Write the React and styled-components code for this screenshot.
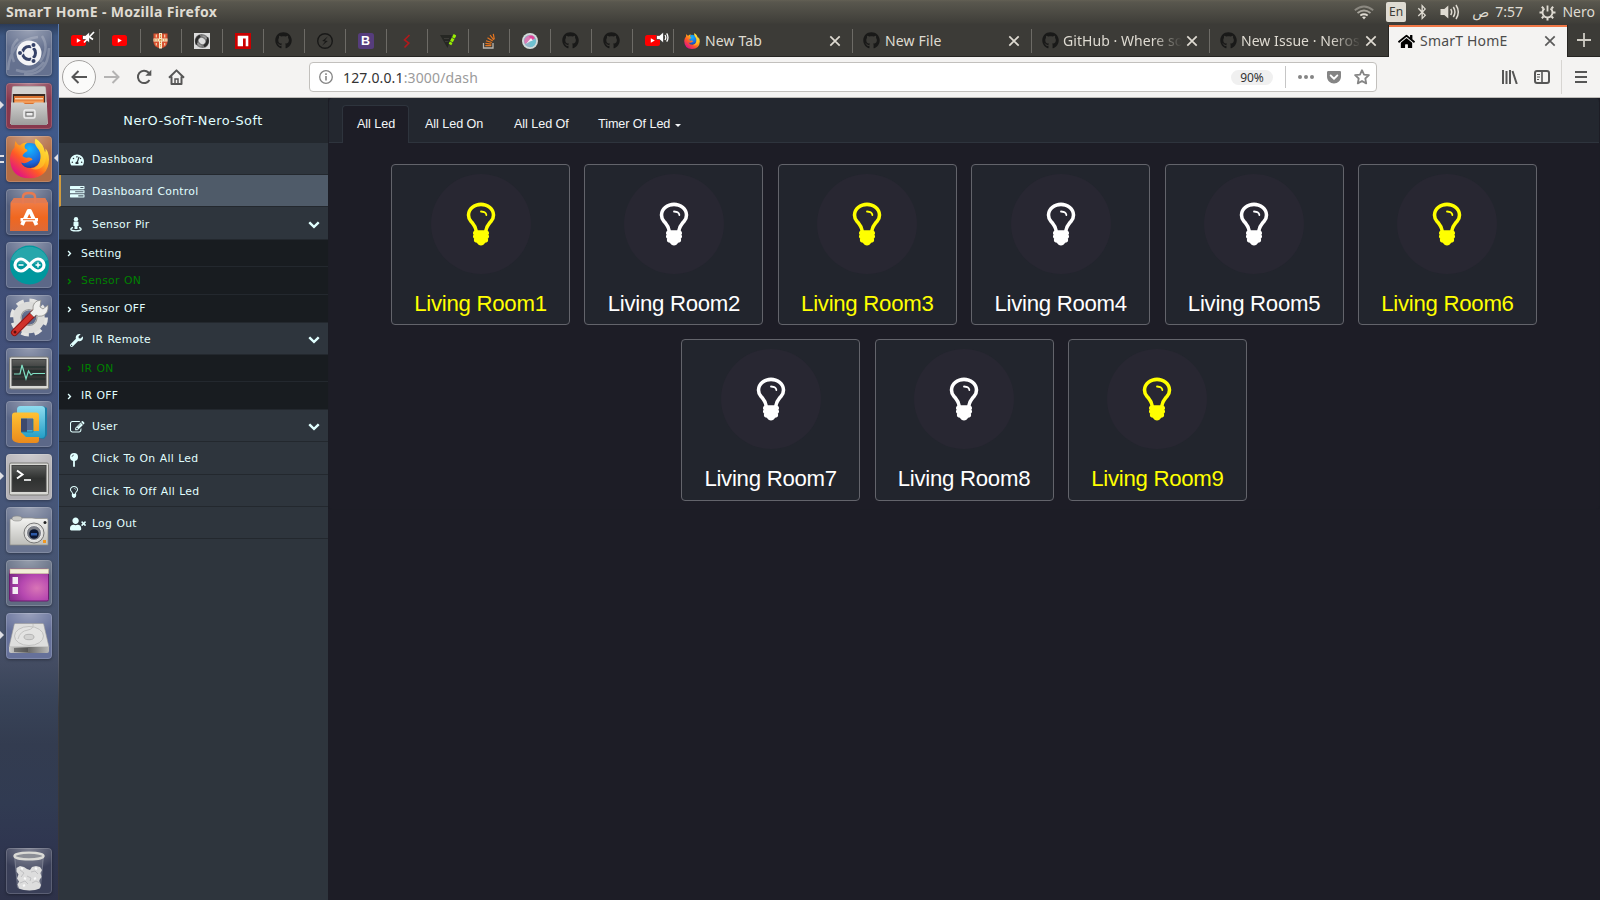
import React from "react";
import styled, { createGlobalStyle, css } from "styled-components";
import {
  FaTachometerAlt, FaWrench, FaUserTimes,
  FaAngleRight, FaGithub, FaHome, FaBluetoothB, FaGetPocket,
} from "react-icons/fa";

const Global = createGlobalStyle`
  * { box-sizing: border-box; }
  html, body { margin: 0; height: 100%; overflow: hidden; }
  svg { display: block; flex: none; }
`;

/* ---------- desktop shell ---------- */
const Desktop = styled.div`
  width: 1600px; height: 900px; overflow: hidden;
  display: flex; flex-direction: column;
  font-family: "Noto Sans", "DejaVu Sans", sans-serif;
  background: #1d1d26;
`;
const TopBar = styled.header`
  height: 24px; flex: none; display: flex; align-items: center; justify-content: space-between;
  padding: 0 5px 0 6px; color: #dfdbd2;
  background: linear-gradient(#636054 0, #59574e 2px, #3f3e39 23px, #3c3b37 24px);
`;
const WindowTitle = styled.div`
  font-size: 14px; font-weight: 700; letter-spacing: 0.33px; line-height: 24px; white-space: nowrap;
`;
const Indicators = styled.div`display: flex; align-items: center; height: 24px; font-size: 14px;`;
const Indicator = styled.div`
  display: flex; align-items: center; justify-content: ${p => (p.$end ? "flex-end" : "center")}; gap: ${p => p.$gap || 6}px;
  width: ${p => p.$w}px; white-space: nowrap; line-height: 22px; height: 23px;
`;
const LangBadge = styled.div`
  width: 20px; height: 20px; border-radius: 2px; background: #dfdbd2; color: #3c3b37;
  font-size: 12px; line-height: 20px; text-align: center;
`;
const Body = styled.div`flex: 1; min-height: 0; display: flex;`;

/* ---------- launcher ---------- */
const Launcher = styled.nav`
  width: 59px; flex: none; display: flex; flex-direction: column; gap: 7px; padding: 6px 0 6px 6px;
  border-right: 1px solid #5673a3;
  border-image: linear-gradient(#5b7cb0, #4e6a9b 55%, #5a6070 72%, #3b3b3e 78%, #35353a) 1;
  background: linear-gradient(#2b3b58 0, #3d5680 12px, #40598a 110px, #3a4a70 190px, #42507a 300px, #465679 470px, #47536c 600px, #434c62 640px, #394459 672px, #333c50 720px, #313b52 780px, #2f3650 820px, #2e3249 876px);
`;
const Tile = styled.div`
  position: relative; width: 46px; height: 46px; flex: none; border-radius: 4px;
  margin-top: ${p => (p.$last ? "auto" : 0)};
  background: radial-gradient(ellipse 32px 22px at 50% 0, rgba(255,255,255,.34), rgba(255,255,255,0)), ${p => p.$bg};
  box-shadow: inset 0 0 0 1px rgba(255,255,255,.17), 0 1px 3px rgba(0,0,0,.35);
`;
const Pip = styled.i`
  position: absolute; top: 18px; width: 0; height: 0; border: 4px solid transparent;
  ${p => p.$right
    ? css`right: -6px; border-right-color: #dfdfe4; border-left-width: 0;`
    : css`left: -6px; border-left-color: #dfdfe4; border-right-width: 0;`}
`;
const DoublePip = styled.i`
  position: absolute; left: -6px; top: 19px; width: 4px; height: 8px;
  border: solid #dfdfe4; border-width: 2px 0;
`;

/* ---------- browser ---------- */
const Browser = styled.main`flex: 1; min-width: 0; display: flex; flex-direction: column;`;
const TabStrip = styled.div`
  height: 33px; flex: none; display: flex; background: #3c3b37; border-bottom: 1px solid #262522;
`;
const Sep = css`
  &::after { content: ""; width: 1px; height: 24px; background: #6d6b66; flex: none; align-self: center; margin-top: 1px; }
`;
const PinnedTab = styled.div`
  width: 41px; flex: none; display: flex; align-items: center;
  ${Sep}
`;
const PinIcon = styled.div`
  position: relative; flex: 1; display: flex; align-items: center; justify-content: center; padding: 1px 1px 0 0;
`;
const AudioMark = styled.div`position: absolute; left: 23px; top: -3px;`;
const Tab = styled.div`
  width: ${p => p.$w || 179}px; flex: none; display: flex; align-items: center; padding: 1px 0 0 10px;
  color: ${p => (p.$active ? "#4c4c4c" : "#dfdbd2")};
  ${p => p.$active
    ? css`background: #f4f3f2; border-top: 2px solid #f07746; margin: 1px 0 -1px; box-shadow: -1px 0 #262522, 1px 0 #262522; padding: 0 0 2px 9px; width: 178px; margin-right: 1px;`
    : p.$noSep ? "" : Sep}
`;
const TabLabel = styled.span`
  flex: 1; min-width: 0; margin-left: ${p => (p.$fade ? 4 : 5)}px; overflow: hidden; white-space: nowrap;
  font-size: 14px; line-height: 22px; letter-spacing: ${p => (p.$ls === undefined ? 0.15 : p.$ls)}px;
  ${p => p.$fade && css`mask-image: linear-gradient(90deg, #000 calc(100% - 30px), transparent);`}
`;
const CloseBox = styled.div`width: 12px; margin: 0 ${p => p.$mr || 11}px 0 4px; color: ${p => p.$c || "#dfdbd2"};`;
const NewTabButton = styled.div`flex: 1; display: flex; align-items: center; justify-content: center; color: #cfccc4;`;
const Toolbar = styled.div`
  height: 41px; flex: none; display: flex; align-items: center; color: #565656;
  background: #f4f3f2; border-bottom: 1px solid #bdbbb8;
`;
const BackButton = styled.div`
  width: 34px; height: 34px; margin: 0 0 0 3px; border-radius: 50%; border: 1px solid #a4a2a0;
  background: #fbfbfa; display: flex; align-items: center; justify-content: center;
`;
const ToolIcon = styled.div`
  width: 32px; display: flex; justify-content: center; opacity: ${p => (p.$off ? 0.4 : 1)};
`;
const UrlBar = styled.div`
  width: 1068px; height: 30px; margin-left: 117px; border: 1px solid #c2c0bd; border-radius: 4px;
  background: #fff; display: flex; align-items: center; padding: 0 6px 0 9px;
`;
const Url = styled.div`
  flex: 1; margin-left: 10px; font-size: 14px; letter-spacing: 0.15px; color: #9b9b9b;
  b { font-weight: 400; color: #333; }
`;
const ZoomBadge = styled.div`
  width: 42px; height: 15px; border-radius: 8px; background: #f0f0f0; color: #333;
  font-size: 12px; line-height: 15px; text-align: center; margin-right: 12px;
`;
const VLine = styled.div`width: 1px; height: ${p => p.$h}px; background: ${p => p.$c || "#c6c6c6"};`;
const UrlActions = styled.div`display: flex; align-items: center; gap: 12px; margin-left: 12px; color: #858585;`;
const ToolbarRight = styled.div`margin-left: auto; display: flex; align-items: center;`;
const MenuSlot = styled.div`width: 38px; display: flex; justify-content: center;`;
const Gap = styled.div`width: 3px;`;

/* ---------- page ---------- */
const Page = styled.div`flex: 1; min-height: 0; display: flex; background: #1d1d26;`;
const Sidebar = styled.aside`
  width: 269px; flex: none; background: #2e353d; color: #e1ffff;
  font-family: "DejaVu Sans", Verdana, sans-serif; font-size: 10.8px; letter-spacing: 0.29px; word-spacing: 0.5px;
`;
const Brand = styled.div`
  height: 45px; background: #23282e; display: flex; align-items: center; justify-content: center;
  font-size: 12.9px; letter-spacing: 0.45px; padding: 0 1px 1px 0;
`;
const MenuRow = styled.div`
  height: ${p => p.$h || 32}px; display: flex; align-items: center; border-bottom: 1px solid #23282e;
  padding: 1px 8px 0 11px;
  ${p => p.$active && css`background: #4f5b69; border-left: 2px solid #d19b3d; padding-left: 9px;`}
`;
const MenuIcon = styled.div`width: 22px; display: flex; color: #e1ffff; padding-top: 2px;`;
const MenuText = styled.span`flex: 1; line-height: 20px; white-space: nowrap; padding-top: ${p => (p.$low ? 2 : 1)}px;`;
const SubRow = styled.div`
  height: ${p => p.$h}px; display: flex; align-items: center; background: #181c20;
  border-bottom: 1px solid #23282e; padding-left: 6px; color: ${p => (p.$on ? "green" : "#e1ffff")};
`;
const SubArrow = styled.div`width: 16px; padding-top: 1px;`;

const Content = styled.section`flex: 1; min-width: 0; font-family: "Liberation Sans", Arial, sans-serif;`;
const Panel = styled.div`
  height: 412px; border: 1px solid #1c1d25; border-radius: 4px; border-top: 0;
`;
const NavTabs = styled.div`
  height: 45px; display: flex; align-items: flex-end; padding-left: 13px; background: #23272f;
  border-bottom: 1px solid #2e343d; border-radius: 4px 4px 0 0;
`;
const NavTab = styled.div`
  height: 38px; margin-bottom: -1px; font-size: 12.6px; color: #f4f6f8;
  width: ${p => p.$w}px; white-space: nowrap; border: 1px solid transparent; border-bottom: 0;
  display: flex; align-items: center; padding: 0 0 1px 14px; letter-spacing: -0.06px;
  ${p => p.$active && css`background: #1d1d26; border-color: #2e343d; border-radius: 4px 4px 0 0; margin-right: 1px;`}
`;
const Caret = styled.i`
  border: 3.5px solid transparent; border-top-color: #f4f6f8; border-bottom: 0; margin: 2px 0 0 5px;
`;
const LedGrid = styled.div`
  display: flex; flex-wrap: wrap; justify-content: center; gap: 14px 14.4px; padding: 21px 48px 0 48px;
`;
const LedCard = styled.div`
  width: 179px; height: 161.4px; border: 1px solid #63646b; border-radius: 4px; background: #22252d;
  display: flex; flex-direction: column; align-items: center; padding-top: 9px;
  color: ${p => (p.$on ? "#ffff00" : "#ffffff")};
`;
const Disc = styled.div`
  width: 100px; height: 100px; border-radius: 50%; background: #282732;
  display: flex; align-items: center; justify-content: center;
`;
const LedName = styled.div`
  margin-top: 16px; font-size: 22.2px; letter-spacing: -0.27px; line-height: 27px; white-space: nowrap;
`;

/* ---------- glyphs ---------- */
const Bulb = ({ size, tight }) => (
  <svg width={tight ? size * 0.572 : size} height={size} viewBox={tight ? "384 0 1024 1792" : "0 0 1792 1792"} fill="currentColor">
    <path d="M1120 576q0 13-9.500 22.500t-22.500 9.500-22.500-9.500-9.500-22.500q0-46-54-71t-106-25q-13 0-22.500-9.500t-9.500-22.500 9.500-22.500 22.500-9.500q50 0 99.500 16t87 54 37.500 90zm160 0q0-72-34.500-134t-90-101.500-123-62-136.500-22.500-136.500 22.500-123 62-90 101.500-34.500 134q0 101 68 180 10 11 30.500 33t30.500 33q128 153 141 298h228q13-145 141-298 10-11 30.500-33t30.500-33q68-79 68-180zm128 0q0 155-103 268-45 49-74.500 87t-59.500 95.500-34 107.500q47 28 47 82 0 37-25 64 25 27 25 64 0 52-45 81 13 23 13 47 0 46-31.500 71t-77.500 25q-20 44-60 70t-87 26-87-26-60-70q-46 0-77.500-25t-31.500-71q0-24 13-47-45-29-45-81 0-37 25-64-25-27-25-64 0-54 47-82-4-50-34-107.500t-59.500-95.500-74.500-87q-103-113-103-268 0-99 44.500-184.500t117-142 164-89 186.500-32.500 186.500 32.500 164 89 117 142 44.500 184.500z" />
  </svg>
);
const Tasks = () => (
  <svg width="14.5" height="14.5" viewBox="0 0 1792 1792" fill="currentColor">
    <path d="M1024 1408h640v-128h-640v128zm-384-512h1024v-128h-1024v128zm640-512h384v-128h-384v128zm512 832v256q0 26-19 45t-45 19h-1664q-26 0-45-19t-19-45v-256q0-26 19-45t45-19h1664q26 0 45 19t19 45zm0-512v256q0 26-19 45t-45 19h-1664q-26 0-45-19t-19-45v-256q0-26 19-45t45-19h1664q26 0 45 19t19 45zm0-512v256q0 26-19 45t-45 19h-1664q-26 0-45-19t-19-45v-256q0-26 19-45t45-19h1664q26 0 45 19t19 45z" />
  </svg>
);
const Edit = () => (
  <svg width="14.5" height="14.5" viewBox="0 0 1792 1792" fill="currentColor">
    <path d="M888 1184l116-116-152-152-116 116v56h96v96h56zm440-720q-16-16-33 1l-350 350q-17 17-1 33t33-1l350-350q17-17 1-33zm80 594v190q0 119-84.500 203.500t-203.500 84.500h-832q-119 0-203.500-84.500t-84.500-203.500v-832q0-119 84.500-203.500t203.500-84.500h832q63 0 117 25 15 7 18 23 3 17-9 29l-49 49q-14 14-32 8-23-6-45-6h-832q-66 0-113 47t-47 113v832q0 66 47 113t113 47h832q66 0 113-47t47-113v-126q0-13 9-22l64-64q15-15 35-7t20 29zm-96-738l288 288-672 672h-288v-288zm444 132l-92 92-288-288 92-92q28-28 68-28t68 28l152 152q28 28 28 68t-28 68z" />
  </svg>
);
const StreetView = () => (
  <svg width="12" height="15" viewBox="0 0 12 15" fill="currentColor">
    <circle cx="6" cy="2.200" r="2.200" /><path d="M3.500 5.500q0-1 1-1h3q1 0 1 1v3.500H7.500V12h-3V9h-1z" />
    <path d="M3 10.500Q.8 11 .8 12.200 1 13.900 6 13.900t5.200-1.700Q11.200 11 9 10.500" fill="none" stroke="currentColor" strokeWidth="1.300" />
  </svg>
);
const MapPin = () => (
  <svg width="8" height="14" viewBox="0 0 8 14" fill="currentColor"><circle cx="4" cy="4" r="4" /><path d="M3.100 7h1.800v6.800H3.100z" /><path d="M2 4q0-2 2-2" fill="none" stroke="#2e353d" strokeWidth=".6" /></svg>
);
const ChevronDown = () => (
  <svg width="12" height="12" viewBox="0 0 1792 1792" fill="currentColor">
    <path d="M1683 808l-742 741q-19 19-45 19t-45-19l-742-741q-19-19-19-45.500t19-45.500l166-165q19-19 45-19t45 19l531 531 531-531q19-19 45-19t45 19l166 165q19 19 19 45.500t-19 45.500z" />
  </svg>
);
const Cross = () => (
  <svg width="12" height="12" viewBox="0 0 12 12" stroke="currentColor" strokeWidth="1.7"><path d="M1.300 1.300l9.400 9.400M10.700 1.300l-9.400 9.400" /></svg>
);
const YouTube = () => (
  <svg width="15" height="11" viewBox="0 0 15 11"><rect width="15" height="11" rx="2.500" fill="#f00" /><path d="M5.800 3.200v4.600l4-2.300z" fill="#fff" /></svg>
);
const Speaker = ({ muted }) => (
  <svg width="13" height="13" viewBox="0 0 13 13" stroke="#222" strokeWidth=".6">
    <path d="M.5 4.500h3L7.500 1v11l-4-3.500h-3z" fill="#fff" />
    {muted
      ? <path d="M12 1L2 11.500M8 6.500l3 2" stroke="#fff" strokeWidth="1.700" fill="none" />
      : <path d="M9 4q1.600 2.500 0 5M10.700 2.300q2.600 4.200 0 8.400" stroke="#fff" strokeWidth="1.300" fill="none" />}
  </svg>
);
const Shield = () => (
  <svg width="15" height="16" viewBox="0 0 15 16">
    <path d="M.5.5h14V9q0 5-7 6.500Q.5 14 .5 9z" fill="#d8512f" />
    <path d="M7.500 0v15.500M.5 7h14" stroke="#f6e6c6" strokeWidth="3" />
    <path d="M7.500 1v13M1 7h13" stroke="#d7822c" strokeWidth="1" strokeDasharray="1.500 1" />
    <path d="M3.300 1.500v3M11.700 1.500v3M3.300 10v2.500M11.700 10v2.500" stroke="#f3d3b0" strokeWidth="1.200" />
  </svg>
);
const Swirl = () => (
  <svg width="16" height="16" viewBox="0 0 16 16"><rect width="16" height="16" fill="#dcdcdc" />
    <ellipse cx="8" cy="8" rx="5.400" ry="4.900" transform="rotate(40 8 8)" fill="none" stroke="#777" strokeWidth="4" />
    <path d="M3 11.500Q.8 6 6 2.700" fill="none" stroke="#2a2a2a" strokeWidth="2.400" />
    <path d="M13 4.500Q15.200 10 10 13.300" fill="none" stroke="#2a2a2a" strokeWidth="2.400" />
    <path d="M8.500 3.200q3 .2 4 3M7.500 12.800q-3-.2-4-3" fill="none" stroke="#999" strokeWidth="1.300" /></svg>
);
const Npm = () => (
  <svg width="16" height="16" viewBox="0 0 16 16"><rect width="16" height="16" fill="#cb0000" /><path d="M2.700 2.700h10.600v10.600h-2.600V5.400H8v7.900H2.700z" fill="#fff" /></svg>
);
const Bolt = () => (
  <svg width="16" height="16" viewBox="0 0 16 16"><circle cx="8" cy="8" r="7.300" fill="none" stroke="#191918" strokeWidth="1.400" /><path d="M11 3.200L5.200 7.900l2.900.6L5 12.800l5.800-4.700-2.900-.6z" fill="#191918" /></svg>
);
const BBadgeBox = styled.div`
  width: 16px; height: 16px; border-radius: 2.5px; background: #563d7c; color: #fff;
  font: 700 12.5px/16px "Liberation Sans", sans-serif; text-align: center;
`;
const RedS = () => (
  <svg width="16" height="16" viewBox="0 0 16 16"><path d="M10.500 2L5.500 7l4.300 3-4.300 4.500" fill="none" stroke="#b3191b" strokeWidth="1.600" /></svg>
);
const VMark = () => (
  <svg width="16" height="16" viewBox="0 0 16 16"><path d="M0 2h12L7.500 15z" fill="#262723" /><path d="M4 5.500h5M5 8.500h3.500" stroke="#3c3b37" /><path d="M15 1.800L10 11.500" stroke="#98f000" strokeWidth="3" strokeDasharray="3.500 .7" /></svg>
);
const PinkDisc = () => (
  <svg width="16" height="16" viewBox="0 0 16 16"><circle cx="8" cy="8" r="8" fill="#d3dcda" /><circle cx="8" cy="8" r="6.200" fill="#8fb4c8" />
    <path d="M3 11A6 6 0 0 1 12 3.500L8 8z" fill="#d97bb4" /><path d="M7 3.200q4-1.500 6 2L9 7.500z" fill="#e0459b" /><path d="M8 8l5.800-1.500A6 6 0 0 1 8 14z" fill="#6fc2d0" /><path d="M4 11l5-6 1.800 2.500-3 1z" fill="#f6f0f6" /></svg>
);
const Fox = ({ size }) => (
  <svg width={size} height={size} viewBox="0 0 40 40">
    <defs>
      <linearGradient id="fx" x1=".85" y1=".1" x2=".2" y2=".9"><stop offset="0" stopColor="#fff04a" /><stop offset=".35" stopColor="#ffb01c" /><stop offset=".65" stopColor="#ff5a26" /><stop offset="1" stopColor="#e31580" /></linearGradient>
      <radialGradient id="fb" cx=".5" cy=".2" r=".8"><stop offset="0" stopColor="#15b8ff" /><stop offset=".6" stopColor="#1a66dc" /><stop offset="1" stopColor="#26225f" /></radialGradient>
    </defs>
    <circle cx="20" cy="19" r="14.500" fill="url(#fb)" />
    <path d="M26 0q-2 5 1.500 9 4.500 5 3.500 11-1.500 9-10 9.500-7 0-9.500-5.500 4 1.500 7-.5 3-2.200 4.500-2-.5-2.800-4.500-2.500-3 .8-5.500-1.500.5-2.500 5-5 .2-1.800-2.500-2.500Q14 6 18 4q-5 0-7.500 3-2.500-.5-4.500-4.500Q5 6 5 9 1 13 .5 20 1 39.500 20 40 39 39 39.500 21 39.500 14 36 10q.3 3-.5 4Q34 5 26 0z" fill="url(#fx)" />
    <path d="M31 20q-1 9-10 10 8 3 13-3 4-6 1.500-13-2-7-6-8 2 7 1.500 14z" fill="#ffd32e" opacity=".55" />
  </svg>
);
const StackIcon = () => (
  <svg width="16" height="16" viewBox="0 0 16 16" fill="none"><path d="M2.500 10v5h9.500v-5" stroke="#b9b6b0" strokeWidth="1.300" /><path d="M4.300 12.700h6M4.400 10.300l6 .8M5 7.700l5.800 1.800M6.500 4.800l5.200 3.200M9 2l3.700 4.900M12.300.8l1 5.500" stroke="#e8761f" strokeWidth="1.200" /></svg>
);

/* ---------- launcher drawings, all on a 46px tile ---------- */
const Art = ({ children }) => <svg width="46" height="46" viewBox="0 0 46 46">{children}</svg>;
const UbuntuArt = () => (
  <Art>
    <path d="M2 40Q4 10 32 7M8 32Q2 18 12 9M18 44Q42 46 43 18M10 40q18 6 28-8M36 6q8 12-2 26" stroke="#fff" strokeOpacity=".2" strokeWidth="2.500" fill="none" />
    <circle cx="23" cy="23" r="12.500" fill="#f4f4f6" /><circle cx="23" cy="23" r="6.500" fill="none" stroke="#364268" strokeWidth="3" />
    <path d="M23 23L13 23M23 23l5.500 9M23 23l5.500-9" stroke="#f4f4f6" strokeWidth="1.500" />
    <circle cx="14" cy="23" r="3" fill="#f4f4f6" /><circle cx="27.500" cy="15" r="3" fill="#f4f4f6" /><circle cx="27.500" cy="31" r="3" fill="#f4f4f6" />
    <circle cx="14" cy="23" r="2" fill="#364268" /><circle cx="27.500" cy="15" r="2" fill="#364268" /><circle cx="27.500" cy="31" r="2" fill="#364268" />
  </Art>
);
const FilesArt = () => (
  <Art>
    <defs><linearGradient id="fl" x1="0" y1="0" x2="0" y2="1"><stop offset="0" stopColor="#cfcfcd" /><stop offset="1" stopColor="#9d9d9c" /></linearGradient></defs>
    <path d="M6 5q0-2 2-2h30q2 0 2 2l2 36H4z" fill="#b5b3b0" /><path d="M7 4h32l1 7H6z" fill="#d3d2cf" />
    <rect x="7" y="11" width="32" height="10" fill="#3c2a22" /><path d="M8 13h30v8H8z" fill="#d9722f" /><path d="M9 15h28v1.500H9z" fill="#f9d7ae" /><path d="M9 17.500h28V20H9z" fill="#f29b58" />
    <path d="M5 19.500h12l2 1.500h8l2-1.500h12V42H5z" fill="url(#fl)" /><rect x="18" y="27" width="11" height="8" rx="1.500" fill="#b9b9b8" stroke="#efefef" strokeWidth="1.500" /><rect x="20" y="29.500" width="7" height="3.500" fill="#eee" stroke="#666" strokeWidth=".8" />
  </Art>
);
const FirefoxArt = () => <Art><svg x="3.500" y="2.500" width="40" height="41"><Fox size={40} /></svg></Art>;
const SoftwareArt = () => (
  <Art>
    <defs><linearGradient id="sw" x1="0" y1="0" x2="0" y2="1"><stop offset="0" stopColor="#f0824f" /><stop offset=".6" stopColor="#f0671f" /><stop offset="1" stopColor="#dd6a38" /></linearGradient></defs>
    <path d="M4.500 14L8 9h31l3 5v28h-38z" fill="url(#sw)" /><path d="M4.500 14L8 9h31l3 5z" fill="#e07a52" />
    <path d="M17 15V8q0-4 6-4t6 4v7" fill="none" stroke="#e77a50" strokeWidth="2.500" />
    <path d="M16 36l6.500-14h1.500l6.500 14" fill="none" stroke="#fff" strokeWidth="3.800" strokeLinejoin="round" /><path d="M14.500 29h17.500v3.500H14.500z" fill="#fff" /><path d="M17 30.700h12" stroke="#f0671f" />
  </Art>
);
const ArduinoArt = () => (
  <Art>
    <circle cx="23.500" cy="23" r="19.500" fill="#00979d" /><path d="M5 18a19.500 19.500 0 0 1 37 0q-18 8-37 0z" fill="#fff" opacity=".15" />
    <path d="M23.500 23c-4-5-6-6-8.500-6a6 6 0 1 0 0 12c2.500 0 4.500-1 8.500-6s6-6 8.500-6a6 6 0 1 1 0 12c-2.500 0-4.500-1-8.500-6z" fill="none" stroke="#fff" strokeWidth="3.200" />
    <path d="M12.500 23h5M29.500 23h5M32 20.500v5" stroke="#fff" strokeWidth="1.500" />
  </Art>
);
const SettingsArt = () => (
  <Art>
    <circle cx="23" cy="22.500" r="16.500" fill="none" stroke="#e4e4e2" strokeWidth="5" strokeDasharray="7.400 5.550" /><circle cx="23" cy="22.500" r="11.500" fill="none" stroke="#dcdcda" strokeWidth="8.500" /><circle cx="23" cy="22.500" r="8" fill="none" stroke="#9a9a98" strokeWidth="1.200" />
    <path d="M8.500 37.500L28 18" stroke="#8d1515" strokeWidth="7" strokeLinecap="round" /><path d="M8.500 37.500L28 18" stroke="#d0322b" strokeWidth="5" strokeLinecap="round" />
    <path d="M27 15q-1-9 8-10l-1 7 3 2 5-4q1 9-6 11-4 1-6-1l-2 2-4-4z" fill="#eeeeec" stroke="#8b8b88" strokeWidth=".8" /><circle cx="9" cy="37" r="1.500" fill="#5b0d0d" />
  </Art>
);
const Screen = ({ children, id }) => (
  <>
    <defs><linearGradient id={id} x1="0" y1="0" x2="0" y2="1"><stop offset="0" stopColor="#5c5e5c" /><stop offset=".5" stopColor="#2f3130" /><stop offset="1" stopColor="#3d3d3d" /></linearGradient></defs>
    <rect x="3.500" y="9" width="39" height="32" rx="1.500" fill="#d8d8d4" stroke="#7c7c78" /><rect x="6" y="11.500" width="34" height="26" fill={`url(#${id})`} stroke="#444" />{children}
  </>
);
const MonitorArt = () => (
  <Art><Screen id="mo"><path d="M6.500 19h33M6.500 23h33M6.500 27h33M6.500 31h33" stroke="#1c2b28" /><path d="M8 26h6l2-9 4 14 2.500-8 2.500 4 2-1.500h12" fill="none" stroke="#7fe0c4" strokeWidth="1.200" /></Screen></Art>
);
const VmwareArt = () => (
  <Art>
    <defs><linearGradient id="vb" x1="0" y1="0" x2="0" y2="1"><stop offset="0" stopColor="#8fdcf0" /><stop offset="1" stopColor="#249fc6" /></linearGradient><linearGradient id="vo" x1="0" y1="0" x2="0" y2="1"><stop offset="0" stopColor="#ffc233" /><stop offset="1" stopColor="#ea8a1c" /></linearGradient></defs>
    <path d="M15 8l22-3 4 2v27l-3 4-22-4z" fill="#1b7ea6" />
    <rect x="11" y="5" width="28" height="32" rx="3.500" fill="url(#vb)" />
    <path d="M9 11.500h21q3 0 3 3V30h-6V17.500H15V31l5 5h13v3q0 3-3 3H13q-7-1-7-5V14.500q0-3 3-3z" fill="url(#vo)" />
    <path d="M15 17.500h6V31h-6z" fill="#3d4a6e" /><path d="M21 17.500h6V29h-6z" fill="#56668c" />
    <path d="M15 31h12V18" fill="none" stroke="#1b7ea6" strokeWidth=".8" />
  </Art>
);
const TerminalArt = () => <Art><Screen id="te"><path d="M11 16.500l5.500 4-5.500 4" fill="none" stroke="#fff" strokeWidth="2" /><path d="M18 26h7" stroke="#fff" strokeWidth="1.600" /></Screen></Art>;
const CameraArt = () => (
  <Art>
    <defs><linearGradient id="ca" x1="0" y1="0" x2="0" y2="1"><stop offset="0" stopColor="#f3f3f1" /><stop offset="1" stopColor="#bdbdb9" /></linearGradient></defs>
    <path d="M4 12h8l2-1h12l4 .5h11q1 0 1 2v24.500H4z" fill="url(#ca)" stroke="#8c8c88" strokeWidth=".7" /><ellipse cx="11" cy="11.500" rx="5" ry="2.500" fill="#c9c9c5" stroke="#888" strokeWidth=".6" />
    <circle cx="28" cy="26" r="10" fill="#dededc" stroke="#777" /><circle cx="28" cy="26" r="7.500" fill="#7d8088" stroke="#eee" /><circle cx="28" cy="27" r="4.800" fill="#0b1530" /><path d="M25 26h6v2.500h-6z" fill="#2c59a8" />
    <circle cx="39" cy="15.500" r="1.500" fill="#222" /><rect x="37" y="33" width="3" height="3" fill="#f2971f" />
  </Art>
);
const WindowArt = () => (
  <Art>
    <defs><radialGradient id="wi" cx=".7" cy=".6" r=".8"><stop offset="0" stopColor="#d975b6" /><stop offset=".5" stopColor="#b648b0" /><stop offset="1" stopColor="#7d2b86" /></radialGradient></defs>
    <rect x="3.500" y="9" width="39" height="32" rx="1.500" fill="url(#wi)" stroke="#6d1a70" /><path d="M4 9h38.500v4.500H4z" fill="#f1eed8" stroke="#cfc8a2" strokeWidth=".7" />
    <path d="M6.500 17H12v7H6.500zM6.500 27H12v7H6.500z" fill="#f3eef3" />
  </Art>
);
const DiskArt = () => (
  <Art>
    <defs><linearGradient id="di" x1="0" y1="0" x2="1" y2="0"><stop offset="0" stopColor="#cfcfcd" /><stop offset=".5" stopColor="#6c6c6b" /><stop offset="1" stopColor="#b9b9b7" /></linearGradient></defs>
    <path d="M9.500 10.500h27q1 0 1.300 1L43 34H3l5.200-22.500q.3-1 1.300-1z" fill="#dededd" stroke="#999" strokeWidth=".6" />
    <ellipse cx="23" cy="23" rx="14.500" ry="9.500" fill="#e3e3e2" stroke="#c2c2c1" /><ellipse cx="23" cy="24" rx="5" ry="2.700" fill="#d2d2d1" stroke="#aaa" strokeWidth=".8" /><path d="M27 11q1 5-5 6-8 1-10 9" fill="none" stroke="#c4c4c3" />
    <path d="M3 34h40v4q0 2-2 2H5q-2 0-2-2z" fill="url(#di)" /><path d="M8 35h14v4H8z" fill="#444" opacity=".6" />
  </Art>
);
const TrashArt = () => (
  <Art>
    <path d="M8.500 8h29l-3 31q-.3 2.500-11.500 2.500T11.500 39z" fill="#fff" fillOpacity=".12" stroke="#d5d7de" strokeOpacity=".3" />
    <path d="M10.500 20l3.500-2 4 1 3 2 3 1 2-3 4-1 4 1 2 3-1.500 3 1 4-2 3v2l1.500 3-1.500 3.500q-4 2-10 2t-10.500-2l-1.500-4 1.500-3-2-3 1.500-4-2-3z" fill="#dddddd" />
    <path d="M14 22l4 3-3 4M25 24l4-1 3 3M14 35l5-2 3 3M26 35l4-2 4 2M21 28l4 2-1 3" fill="none" stroke="#c0c0c2" />
    <path d="M15 20l2 1M29 20l2 1M18 30l2 1M30 30l-2 1M17 38l2-1" stroke="#fafafa" strokeWidth="2" />
    <ellipse cx="23" cy="8" rx="14.500" ry="3.400" fill="#8b8e96" stroke="#dadad6" strokeWidth="2.400" />
  </Art>
);

const APPS = [
  { art: UbuntuArt, bg: "#65718f" },
  { art: FilesArt, bg: "#87384d", pip: true },
  { art: FirefoxArt, bg: "#b26c44", dbl: true },
  { art: SoftwareArt, bg: "#535e7c" },
  { art: ArduinoArt, bg: "#5c6888" },
  { art: SettingsArt, bg: "#5c6888" },
  { art: MonitorArt, bg: "#5c6888" },
  { art: VmwareArt, bg: "#5c6888" },
  { art: TerminalArt, bg: "#b4b2b6", pip: true },
  { art: CameraArt, bg: "#68738f" },
  { art: WindowArt, bg: "#606b81" },
  { art: DiskArt, bg: "#66719a", pip: true },
];

const PINNED = [
  <><YouTube /><AudioMark><Speaker muted /></AudioMark></>,
  <YouTube />, <Shield />, <Swirl />, <Npm />,
  <FaGithub size={17} color="#191918" />, <Bolt />, <BBadgeBox>B</BBadgeBox>, <RedS />, <VMark />,
  <StackIcon />, <PinkDisc />,
  <FaGithub size={17} color="#191918" />, <FaGithub size={17} color="#191918" />,
  <><YouTube /><AudioMark><Speaker /></AudioMark></>,
];

const LEDS = [true, false, true, false, false, true, false, false, true];

function TopPanel() {
  return (
    <TopBar>
      <WindowTitle>SmarT HomE - Mozilla Firefox</WindowTitle>
      <Indicators>
        <Indicator $w={22}>
          <svg width="20" height="15" viewBox="0 0 20 15" fill="none" strokeWidth="1.800">
            <path d="M.8 5.200q9.200-7.500 18.400 0" stroke="#8b8880" /><path d="M3.500 8q6.500-5 13 0" stroke="#a9a69d" /><path d="M6.300 10.500q3.700-2.500 7.400 0" stroke="#dfdbd2" /><path d="M8 12l2 2.500 2-2.500q-2-1.200-4 0z" fill="#dfdbd2" />
          </svg>
        </Indicator>
        <Indicator $w={42}><LangBadge>En</LangBadge></Indicator>
        <Indicator $w={10}><FaBluetoothB size={16} /></Indicator>
        <Indicator $w={46}>
          <svg width="20" height="16" viewBox="0 0 20 16" fill="none" stroke="#dfdbd2" strokeWidth="1.500"><path d="M.5 5h3.800l4-3.500v13L4.300 11H.5z" fill="#dfdbd2" stroke="none" /><path d="M10.700 5q2 3 0 6M13.300 3q3.300 5 0 10M16 1q4.600 7 0 14" /></svg>
        </Indicator>
        <Indicator $w={50} $end><span>ص</span><span>7:57</span></Indicator>
        <Indicator $w={72} $end>
          <svg width="17" height="17" viewBox="0 0 17 17" fill="none" stroke="#dfdbd2"><path d="M5.500 4.400a5 5 0 1 0 6 0" strokeWidth="1.900" /><path d="M8.500 1.500v6" strokeWidth="1.800" /><path d="M2.800 2.800l1.700 1.700M14.200 2.800l-1.700 1.700M.5 8.500H3M14 8.500h2.500M2.800 14.200l1.700-1.700M14.200 14.200l-1.700-1.700M8.500 14v2.500" strokeWidth="2" /></svg>
          Nero
        </Indicator>
      </Indicators>
    </TopBar>
  );
}

function Tabs() {
  const gh = <FaGithub size={17} color="#191918" />;
  return (
    <TabStrip>
      {PINNED.map((icon, i) => <PinnedTab key={i}><PinIcon>{icon}</PinIcon></PinnedTab>)}
      <Tab><Fox size={16} /><TabLabel>New Tab</TabLabel><CloseBox><Cross /></CloseBox></Tab>
      <Tab>{gh}<TabLabel>New File</TabLabel><CloseBox><Cross /></CloseBox></Tab>
      <Tab $w={178}>{gh}<TabLabel $fade $ls={0.05}>GitHub · Where so</TabLabel><CloseBox><Cross /></CloseBox></Tab>
      <Tab $noSep>{gh}<TabLabel $fade $ls={0.05}>New Issue · Neros</TabLabel><CloseBox $mr={12}><Cross /></CloseBox></Tab>
      <Tab $active><FaHome size={17} color="#000" /><TabLabel $ls={0.2}>SmarT HomE</TabLabel><CloseBox $c="#5a5a5a"><Cross /></CloseBox></Tab>
      <NewTabButton><svg width="14" height="14" viewBox="0 0 14 14" stroke="currentColor" strokeWidth="1.800"><path d="M7 0v14M0 7h14" /></svg></NewTabButton>
    </TabStrip>
  );
}

function NavBar() {
  return (
    <Toolbar>
      <BackButton><svg width="16" height="14" viewBox="0 0 16 14" fill="none" stroke="currentColor" strokeWidth="2"><path d="M16 7H1.500M7.500 1l-6 6 6 6" /></svg></BackButton>
      <ToolIcon $off><svg width="16" height="14" viewBox="0 0 16 14" fill="none" stroke="currentColor" strokeWidth="2"><path d="M0 7h14.500M8.500 1l6 6-6 6" /></svg></ToolIcon>
      <ToolIcon><svg width="16" height="16" viewBox="0 0 16 16" fill="none" stroke="currentColor" strokeWidth="2"><path d="M13.500 11A6.200 6.200 0 1 1 12.500 3.500L14 5.300" /><path d="M15.300.8v6h-6z" fill="currentColor" stroke="none" /></svg></ToolIcon>
      <ToolIcon><svg width="17" height="16" viewBox="0 0 17 16" fill="none" stroke="currentColor" strokeWidth="2"><path d="M1 8.700L8.500 1.400 16 8.700M3.500 7.500V15h10V7.500" strokeLinejoin="round" /><path d="M7 15v-5h3v5" strokeWidth="1.500" /></svg></ToolIcon>
      <UrlBar>
        <svg width="14" height="14" viewBox="0 0 14 14" fill="none" stroke="#858585"><circle cx="7" cy="7" r="6.300" strokeWidth="1.300" /><path d="M7 6v4.500M7 3.300v1.700" strokeWidth="1.600" /></svg>
        <Url><b>127.0.0.1</b>:3000/dash</Url>
        <ZoomBadge>90%</ZoomBadge>
        <VLine $h={22} />
        <UrlActions>
          <svg width="16" height="4" viewBox="0 0 16 4" fill="currentColor"><circle cx="2" cy="2" r="2" /><circle cx="8" cy="2" r="2" /><circle cx="14" cy="2" r="2" /></svg>
          <FaGetPocket size={16} />
          <svg width="16" height="16" viewBox="0 0 16 16" fill="none" stroke="currentColor" strokeWidth="1.800" strokeLinejoin="round"><path d="M8 1.200l2 4.400 4.900.6-3.600 3.300.9 4.900L8 12l-4.200 2.400.9-4.900L1.100 6.200 6 5.600z" /></svg>
        </UrlActions>
      </UrlBar>
      <ToolbarRight>
        <ToolIcon><svg width="16" height="14" viewBox="0 0 16 14" stroke="currentColor" strokeWidth="2"><path d="M1 0v14M4.500 1v13M8 0v14M10.500 1l4.300 13" /></svg></ToolIcon>
        <ToolIcon><svg width="16" height="14" viewBox="0 0 16 14" fill="none" stroke="currentColor"><rect x="1" y="1" width="14" height="12" rx="2" strokeWidth="2" /><path d="M8 1v12" strokeWidth="1.600" /><path d="M3 4.500h3M3 7h3M3 9.500h2" strokeWidth="1" /></svg></ToolIcon>
        <Gap />
        <VLine $h={34} $c="#d7d5d2" />
        <MenuSlot><svg width="12" height="12" viewBox="0 0 12 12" stroke="currentColor" strokeWidth="2"><path d="M0 1h12M0 6h12M0 11h12" /></svg></MenuSlot>
      </ToolbarRight>
    </Toolbar>
  );
}

const ITEMS = [
  { icon: <FaTachometerAlt size={14} />, text: "Dashboard" },
  { icon: <Tasks />, text: "Dashboard Control", active: true },
  { icon: <StreetView />, text: "Sensor Pir", h: 33, low: true, open: [["Setting", 27], ["Sensor ON", 28, true], ["Sensor OFF", 28]] },
  { icon: <FaWrench size={13} />, text: "IR Remote", open: [["IR ON", 27, true], ["IR OFF", 28]] },
  { icon: <Edit />, text: "User", open: [] },
  { icon: <MapPin />, text: "Click To On All Led", h: 33 },
  { icon: <Bulb size={14} tight />, text: "Click To Off All Led" },
  { icon: <FaUserTimes size={16} />, text: "Log Out" },
];

function SideMenu() {
  return (
    <Sidebar>
      <Brand>NerO-SofT-Nero-Soft</Brand>
      {ITEMS.map(it => (
        <React.Fragment key={it.text}>
          <MenuRow $h={it.h} $active={it.active}>
            <MenuIcon>{it.icon}</MenuIcon>
            <MenuText $low={it.low}>{it.text}</MenuText>
            {it.open && <ChevronDown />}
          </MenuRow>
          {(it.open || []).map(([text, h, on]) => (
            <SubRow key={text} $h={h} $on={on}><SubArrow><FaAngleRight size={9} /></SubArrow>{text}</SubRow>
          ))}
        </React.Fragment>
      ))}
    </Sidebar>
  );
}

export default function App() {
  return (
    <Desktop>
      <Global />
      <TopPanel />
      <Body>
        <Launcher>
          {APPS.map(({ art: Drawing, bg, pip, dbl }, i) => (
            <Tile key={i} $bg={bg}><Drawing />{pip && <Pip />}{dbl && <><DoublePip /><Pip $right /></>}</Tile>
          ))}
          <Tile $bg="#3a3f58" $last><TrashArt /></Tile>
        </Launcher>
        <Browser>
          <Tabs />
          <NavBar />
          <Page>
            <SideMenu />
            <Content>
              <Panel>
                <NavTabs>
                  <NavTab $w={67} $active>All Led</NavTab>
                  <NavTab $w={89}>All Led On</NavTab>
                  <NavTab $w={84}>All Led Of</NavTab>
                  <NavTab $w={120}>Timer Of Led<Caret /></NavTab>
                </NavTabs>
                <LedGrid>
                  {LEDS.map((on, i) => (
                    <LedCard key={i} $on={on}>
                      <Disc><Bulb size={50} /></Disc>
                      <LedName>Living Room{i + 1}</LedName>
                    </LedCard>
                  ))}
                </LedGrid>
              </Panel>
            </Content>
          </Page>
        </Browser>
      </Body>
    </Desktop>
  );
}
